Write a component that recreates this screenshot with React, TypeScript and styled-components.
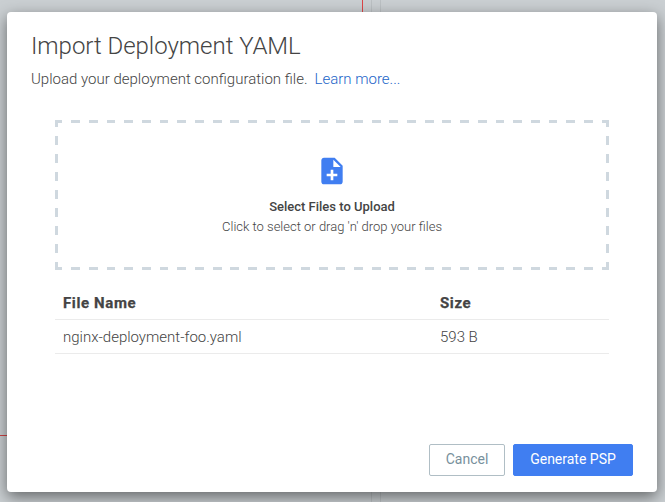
import React from "react";
import styled, { createGlobalStyle } from "styled-components";

const GlobalStyle = createGlobalStyle`
  *, *::before, *::after { box-sizing: border-box; }
  body { margin: 0; overflow: hidden; font-family: Roboto, sans-serif; }
`;

const Backdrop = styled.div`
  position: relative;
  display: flex;
  align-items: flex-start;
  width: 665px;
  height: 502px;
  padding: 12px 8px 10px 7px;
  background: #cacfd2;
  overflow: hidden;
`;

const VerticalRule = styled.span<{ $x: number; $color: string; $height: number }>`
  position: absolute;
  top: 0;
  left: ${(p) => p.$x}px;
  width: 1px;
  height: ${(p) => p.$height}px;
  background: ${(p) => p.$color};
`;

const HorizontalRule = styled.span`
  position: absolute;
  top: 435px;
  left: 0;
  width: 20px;
  height: 1px;
  background: #cf4446;
`;

const Dialog = styled.section`
  position: relative;
  display: flex;
  flex-direction: column;
  width: 650px;
  height: 480px;
  padding: 18px 24px 16px;
  border-radius: 4px;
  background: #fff;
  color: #444;
  box-shadow: 0 5px 15px rgba(0, 0, 0, 0.5);
`;

const Title = styled.h1`
  margin: 0;
  font-size: 24px;
  line-height: 32px;
  font-weight: 300;
  letter-spacing: -0.03px;
`;

const Description = styled.p`
  margin: 6px 0 0;
  font-size: 15px;
  line-height: 22px;
  font-weight: 300;
`;

const Link = styled.a`
  margin-left: 3.4px;
  color: #2264c8;
  text-decoration: none;
`;

const Body = styled.div`
  flex: 1;
  padding: 30px 24px 0;
`;

/* Evenly spaced dashes that start and end on a half dash, 3px in from each corner. */
const dashes = (angle: string, period: number) => {
  const q = period / 4;
  return `repeating-linear-gradient(${angle}, #cfd8df 3px ${3 + q}px, transparent ${3 + q}px ${3 + 3 * q}px, #cfd8df ${3 + 3 * q}px ${3 + 4 * q}px)`;
};

const DropZone = styled.div`
  display: flex;
  flex-direction: column;
  align-items: center;
  height: 150px;
  padding-top: 35px;
  background-image: ${dashes("90deg", 548 / 31)}, ${dashes("90deg", 548 / 31)},
    ${dashes("180deg", 18)}, ${dashes("180deg", 18)};
  background-size: 100% 3px, 100% 3px, 3px 100%, 3px 100%;
  background-position: left top, left bottom, left top, right top;
  background-repeat: no-repeat;
  font-size: 13px;
  line-height: 20px;
  font-weight: 300;
`;

const FileIcon = styled.svg`
  display: block;
  width: 32px;
  height: 32px;
  margin-bottom: 10px;
  fill: #407ef1;
`;

const DropTitle = styled.strong`
  font-weight: 500;
`;

const FileTable = styled.table`
  width: 100%;
  margin-top: 16px;
  border-collapse: collapse;
  table-layout: fixed;
  font-size: 15px;
  line-height: 18px;
  text-align: left;
`;

const Row = styled.tr`
  border-bottom: 1px solid #ebebeb;
`;

const HeadCell = styled.th<{ $width?: number }>`
  width: ${(p) => (p.$width ? `${p.$width}px` : "auto")};
  height: 33px;
  padding: 2px 8px 0;
  font-weight: 700;
  letter-spacing: 0.62px;
  -webkit-text-stroke: 0.25px #444;
`;

const Cell = styled.td`
  height: 34px;
  padding: 2px 8px 0;
  font-weight: 300;
`;

const Footer = styled.footer`
  display: flex;
  justify-content: flex-end;
  gap: 8px;
`;

const Button = styled.button<{ $primary?: boolean }>`
  width: ${(p) => (p.$primary ? 120 : 76)}px;
  height: 32px;
  padding: 0 0 2px;
  border: 1px solid ${(p) => (p.$primary ? "#407ef1" : "#b0bec5")};
  border-radius: 2px;
  background: ${(p) => (p.$primary ? "#407ef1" : "#fff")};
  color: ${(p) => (p.$primary ? "#fff" : "#78909c")};
  font: 400 14px Roboto, sans-serif;
`;

const files = [{ name: "nginx-deployment-foo.yaml", size: "593 B" }];

export default function App() {
  return (
    <>
      <GlobalStyle />
      <Backdrop>
        <VerticalRule $x={362} $color="#dc4648" $height={20} />
        <VerticalRule $x={371} $color="#bbc0c3" $height={502} />
        <VerticalRule $x={380} $color="#bbc0c3" $height={502} />
        <HorizontalRule />
        <Dialog role="dialog">
          <Title>Import Deployment YAML</Title>
          <Description>
            Upload your deployment configuration file. <Link href="#">Learn more...</Link>
          </Description>
          <Body>
            <DropZone>
              <FileIcon viewBox="0 0 24 24">
                <path d="M14 2H6c-1.1 0-2 .9-2 2v16c0 1.1.89 2 1.99 2H18c1.1 0 2-.9 2-2V8l-6-6zm2 14h-3v3h-2v-3H8v-2h3v-3h2v3h3v2zm-3-7V3.5L18.500 9H13z" />
              </FileIcon>
              <DropTitle>Select Files to Upload</DropTitle>
              <span>Click to select or drag 'n' drop your files</span>
            </DropZone>
            <FileTable>
              <thead>
                <Row>
                  <HeadCell $width={377}>File Name</HeadCell>
                  <HeadCell>Size</HeadCell>
                </Row>
              </thead>
              <tbody>
                {files.map((file) => (
                  <Row key={file.name}>
                    <Cell>{file.name}</Cell>
                    <Cell>{file.size}</Cell>
                  </Row>
                ))}
              </tbody>
            </FileTable>
          </Body>
          <Footer>
            <Button>Cancel</Button>
            <Button $primary>Generate PSP</Button>
          </Footer>
        </Dialog>
      </Backdrop>
    </>
  );
}
